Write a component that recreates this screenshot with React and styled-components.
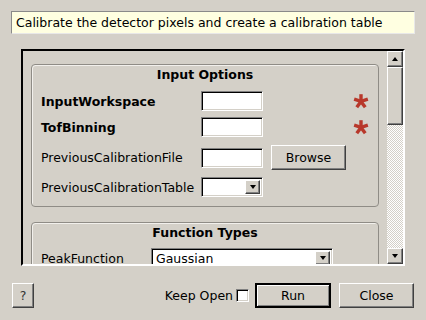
import React from 'react';
import styled, { createGlobalStyle, css } from 'styled-components';

const BG = '#d4d0c8';

const Global = createGlobalStyle`
  html, body { margin: 0; padding: 0; }
  body {
    background: ${BG};
    font-family: "DejaVu Sans", "Noto Sans", sans-serif;
    font-size: 12px;
    color: #000;
    overflow: hidden;
  }
`;

const raised = css`
  border: 1px solid;
  border-color: #ffffff #404040 #404040 #ffffff;
  box-shadow: inset -1px -1px 0 #808080;
  background: ${BG};
`;

const sunken = css`
  border: 1px solid;
  border-color: #808080 #ffffff #ffffff #808080;
  box-shadow: inset 1px 1px 0 #000000, inset -1px -1px 0 ${BG};
`;

const Window = styled.div`
  width: 426px;
  height: 320px;
  box-sizing: border-box;
  padding: 11px 12px 0 11px;
  display: flex;
  flex-direction: column;
`;

const Description = styled.div`
  box-sizing: border-box;
  width: 404px;
  height: 23px;
  background: #ffffe1;
  border: 1px solid;
  border-color: #8a8a8a #e8e8e8 #e8e8e8 #8a8a8a;
  padding: 0 4px;
  display: flex;
  align-items: center;
  font-size: 12.5px;
  white-space: nowrap;
`;

const ScrollFrame = styled.div`
  box-sizing: border-box;
  margin: 15px 0 0 10px;
  width: 384px;
  height: 217px;
  border: 2px solid;
  border-color: #000 #fff #fff #000;
  display: flex;
`;

const Viewport = styled.div`
  flex: 1;
  overflow: hidden;
  padding: 13px 8px 0 8px;
  box-sizing: border-box;
`;

const ScrollBar = styled.div`
  width: 16px;
  display: flex;
  flex-direction: column;
`;

const ArrowButton = styled.div`
  ${raised};
  box-sizing: border-box;
  width: ${p => p.$w || 16}px;
  height: ${p => p.$h || 16}px;
  display: flex;
  align-items: center;
  justify-content: center;
  flex: none;
`;

const Triangle = styled.div`
  width: 0;
  height: 0;
  border-left: 3.5px solid transparent;
  border-right: 3.5px solid transparent;
  ${p => p.$up
    ? css`border-bottom: 4px solid #000;`
    : css`border-top: 4px solid #000;`}
`;

const Track = styled.div`
  flex: 1;
  display: flex;
  flex-direction: column;
  background: repeating-conic-gradient(#ffffff 0 25%, ${BG} 0 50%) 0 0 / 2px 2px;
`;

const Thumb = styled.div`
  ${raised};
  box-sizing: border-box;
  height: 58px;
`;

const Group = styled.div`
  box-sizing: border-box;
  width: 348px;
  border: 1px solid #8f8c86;
  border-radius: 4px;
  box-shadow: inset 1px 1px 0 #f2f0ec;
  padding: 2px 9px 9px 9px;
  margin-top: ${p => p.$mt || 0}px;
  display: flex;
  flex-direction: column;
`;

const GroupTitle = styled.div`
  font-weight: bold;
  text-align: center;
  height: 16px;
  line-height: 16px;
  font-size: 12.5px;
`;

const Row = styled.div`
  display: flex;
  align-items: center;
  height: ${p => p.$h || 20}px;
  margin-top: ${p => p.$mt || 0}px;
  flex: none;
`;

const Label = styled.div`
  width: ${p => p.$w || 160}px;
  flex: none;
  font-weight: ${p => (p.$bold ? 'bold' : 'normal')};
  font-size: 12.5px;
  white-space: nowrap;
`;

const TextInput = styled.div`
  ${sunken};
  box-sizing: border-box;
  width: 62px;
  height: 20px;
  background: #fff;
  flex: none;
`;

const Combo = styled.div`
  ${sunken};
  box-sizing: border-box;
  width: ${p => p.$w || 62}px;
  height: 20px;
  background: #fff;
  flex: none;
  display: flex;
  align-items: center;
  justify-content: space-between;
  padding: 2px 2px 2px 4px;
  font-size: 12.5px;
`;

const Button = styled.div`
  ${raised};
  box-sizing: border-box;
  width: ${p => p.$w}px;
  height: 25px;
  display: flex;
  align-items: center;
  justify-content: center;
  flex: none;
  font-size: 12.5px;
  margin-left: ${p => p.$ml || 0}px;
  ${p => p.$default && css`
    border: 2px solid #000;
    box-shadow: inset 1px 1px 0 #fff, inset -1px -1px 0 #808080;
  `}
`;

const HelpButton = styled(Button)`
  color: #333;
  margin-left: 1px;
`;

const Star = styled.svg`
  margin-left: auto;
  margin-right: 0;
  flex: none;
`;

const BottomBar = styled.div`
  display: flex;
  align-items: center;
  margin-top: 17px;
  height: 25px;
`;

const Spacer = styled.div`
  flex: 1;
`;

const CheckLabel = styled.div`
  font-size: 12.5px;
  white-space: nowrap;
`;

const CheckBox = styled.div`
  ${sunken};
  box-sizing: border-box;
  width: 13px;
  height: 13px;
  background: #fff;
  margin-left: 3px;
  flex: none;
`;

const Asterisk = () => {
  const angles = [-90, -18, 54, 126, 198];
  return (
    <Star width="16" height="16" viewBox="0 0 16 16">
      {angles.map(a => {
        const r = (a * Math.PI) / 180;
        return (
          <line
            key={a}
            x1="8"
            y1="8.4"
            x2={8 + 7.2 * Math.cos(r)}
            y2={8.4 + 7.2 * Math.sin(r)}
            stroke="#b8382b"
            strokeWidth="3.4"
          />
        );
      })}
    </Star>
  );
};

export default function App() {
  return (
    <>
      <Global />
      <Window>
        <Description>Calibrate the detector pixels and create a calibration table</Description>
        <ScrollFrame>
          <Viewport>
            <Group>
              <GroupTitle>Input Options</GroupTitle>
              <Row $mt={8}>
                <Label $bold>InputWorkspace</Label>
                <TextInput />
                <Asterisk />
              </Row>
              <Row $mt={6}>
                <Label $bold>TofBinning</Label>
                <TextInput />
                <Asterisk />
              </Row>
              <Row $mt={8} $h={25}>
                <Label>PreviousCalibrationFile</Label>
                <TextInput />
                <Button $w={75} $ml={8}>Browse</Button>
              </Row>
              <Row $mt={7}>
                <Label>PreviousCalibrationTable</Label>
                <Combo>
                  <span />
                  <ArrowButton $w={15} $h={14}><Triangle /></ArrowButton>
                </Combo>
              </Row>
            </Group>
            <Group $mt={15}>
              <GroupTitle>Function Types</GroupTitle>
              <Row $mt={7}>
                <Label $w={110}>PeakFunction</Label>
                <Combo $w={182}>
                  <span>Gaussian</span>
                  <ArrowButton $w={15} $h={14}><Triangle /></ArrowButton>
                </Combo>
              </Row>
            </Group>
          </Viewport>
          <ScrollBar>
            <ArrowButton><Triangle $up /></ArrowButton>
            <Track>
              <Thumb />
            </Track>
            <ArrowButton><Triangle /></ArrowButton>
          </ScrollBar>
        </ScrollFrame>
        <BottomBar>
          <HelpButton $w={22}>?</HelpButton>
          <Spacer />
          <CheckLabel>Keep Open</CheckLabel>
          <CheckBox />
          <Button $w={76} $ml={6} $default>Run</Button>
          <Button $w={75} $ml={8}>Close</Button>
        </BottomBar>
      </Window>
    </>
  );
}
